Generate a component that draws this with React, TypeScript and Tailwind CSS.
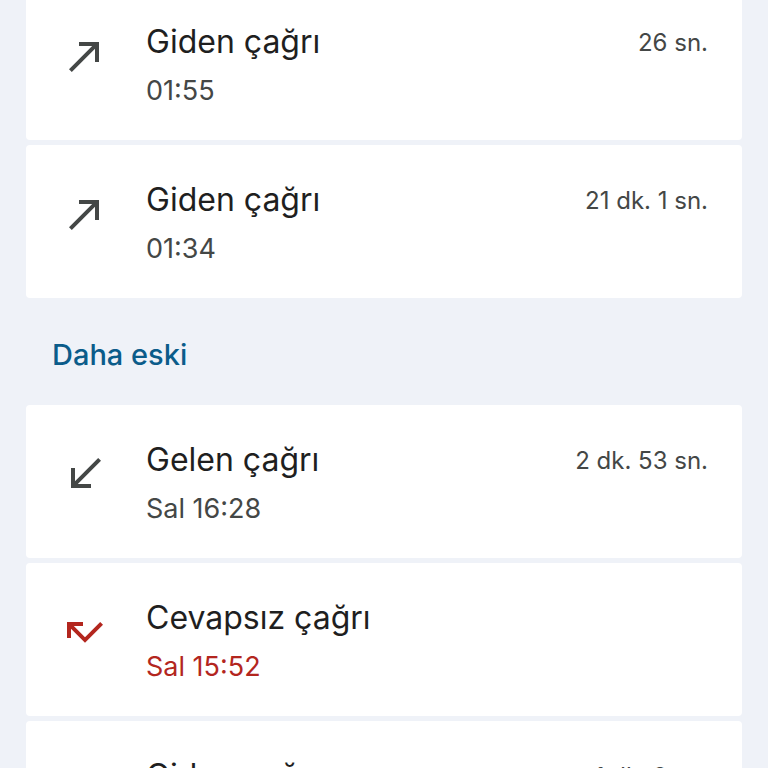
const CALL_MADE = "M9 5v2h6.59L4 18.59 5.41 20 17 8.41V15h2V5z";
const CALL_RECEIVED = "M20 5.41L18.59 4 7 15.59V9H5v10h10v-2H8.41z";
const CALL_MISSED = "M19.59 7L12 14.59 6.41 9H11V7H3v8h2v-4.59l7 7 9-9z";

type Call = {
  title: string;
  time: string;
  duration?: string;
  icon: string;
  missed?: boolean;
};

const recent: Call[] = [
  { title: "Giden çağrı", time: "01:55", duration: "26 sn.", icon: CALL_MADE },
  { title: "Giden çağrı", time: "01:34", duration: "21 dk. 1 sn.", icon: CALL_MADE },
];

const older: Call[] = [
  { title: "Gelen çağrı", time: "Sal 16:28", duration: "2 dk. 53 sn.", icon: CALL_RECEIVED },
  { title: "Cevapsız çağrı", time: "Sal 15:52", icon: CALL_MISSED, missed: true },
  { title: "Giden çağrı", time: "Sal 15:40", duration: "1 dk. 2 sn.", icon: CALL_MADE },
];

function CallRow({ call }: { call: Call }) {
  return (
    <div className="flex h-[153px] shrink-0 items-start rounded-[4px] bg-white pl-[35px] pr-[34px] pt-[35px]">
      <svg
        viewBox="0 0 24 24"
        className={`mt-[10px] h-12 w-12 shrink-0 ${call.missed ? "fill-[#b3261e]" : "fill-[#444746]"}`}
      >
        <path d={call.icon} />
      </svg>
      <div className="ml-[37px] flex flex-1 flex-col">
        <span className="text-[32px] leading-[40px] text-[#1f1f1f]">{call.title}</span>
        <span
          className={`mt-[12px] text-[27px] leading-[34px] ${call.missed ? "text-[#b3261e]" : "text-[#444746]"}`}
        >
          {call.time}
        </span>
      </div>
      {call.duration && (
        <span className="mt-[3px] text-[24px] leading-[36px] text-[#444746]">{call.duration}</span>
      )}
    </div>
  );
}

export default function App() {
  return (
    <div
      className="flex h-[768px] w-[768px] flex-col overflow-hidden bg-[#eff2f8] px-[26px]"
      style={{ fontFamily: "Inter, Roboto, 'Noto Sans', sans-serif" }}
    >
      <div className="-mt-[13px] flex flex-col gap-[5px]">
        {recent.map((c, i) => (
          <CallRow key={i} call={c} />
        ))}
      </div>
      <div className="flex h-[107px] shrink-0 items-center pl-[26px] pt-[6px]">
        <span className="text-[29px] font-medium text-[#0b5c8a]">Daha eski</span>
      </div>
      <div className="flex flex-col gap-[5px]">
        {older.map((c, i) => (
          <CallRow key={i} call={c} />
        ))}
      </div>
    </div>
  );
}
